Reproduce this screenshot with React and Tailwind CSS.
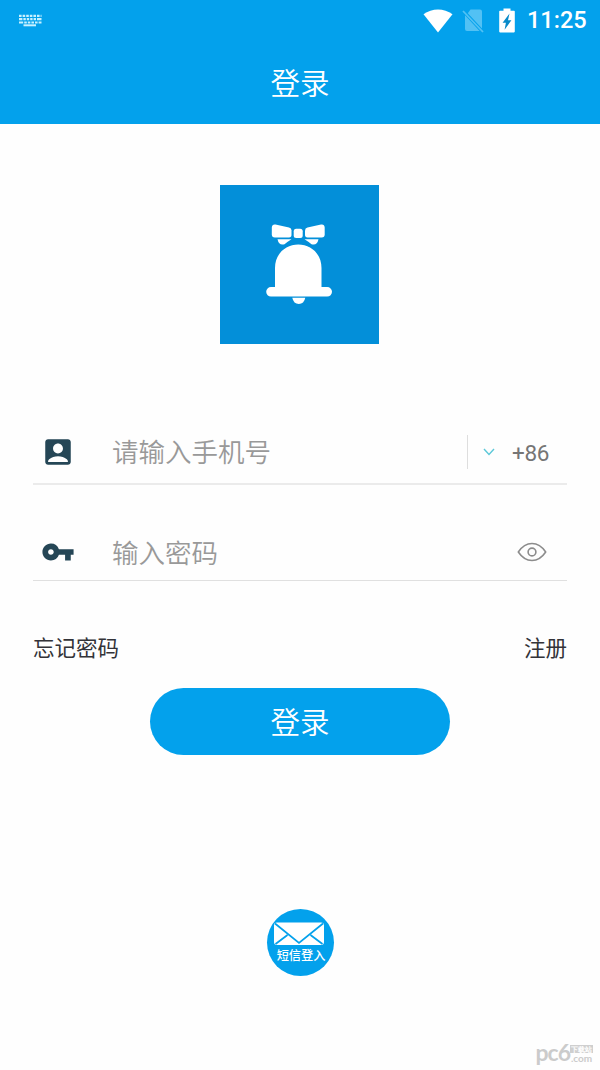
import { useState } from "react";
import { MdAccountBox, MdVpnKey } from "react-icons/md";

function KeyboardIcon() {
  return (
    <svg className="w-[24px] h-[13px]" viewBox="0 0 24 13" fill="none" stroke="#c8f1ff">
      <path d="M1 1.8H23.5" strokeWidth="2.2" strokeDasharray="2.6 1" />
      <path d="M1 5.1H23.5" strokeWidth="2.2" strokeDasharray="3.4 1 2.4 1 2.4 1 2.4 1 2.4 1 5" />
      <path d="M1 8.4H23.5" strokeWidth="2" strokeDasharray="4.2 1 2.6 1 2.6 1 2.6 1 2.6 1 4" />
      <path d="M5.5 11.3H18" strokeWidth="2" />
    </svg>
  );
}

function StatusBar() {
  return (
    <div className="h-[41px] pl-[18px] pr-[13px] flex items-center justify-between text-white">
      <KeyboardIcon />
      <div className="flex items-center">
        <svg className="w-[30px] h-[24px]" viewBox="0 0 30 24" fill="currentColor">
          <path d="M0.5 5.2C9-1.2 21-1.2 29.5 5.2L15 23.5z" />
        </svg>
        <svg className="w-[22px] h-[24px] ml-[9px]" viewBox="0 0 22 24">
          <path d="M8.5 0.5H18a2 2 0 0 1 2 2v17L5.8 4.3zM3 6.2 17.6 22H5a2 2 0 0 1-2-2z" fill="#52c1f4" />
          <path d="M1 2 21 23" stroke="#52c1f4" strokeWidth="1.8" />
        </svg>
        <svg className="w-[16px] h-[25px] ml-[15px]" viewBox="0 0 16 25">
          <path d="M4.5 0.5h7v2.3H15a.8.8 0 0 1 .8.8v20a.8.8 0 0 1-.8.8H1a.8.8 0 0 1-.8-.8v-20a.8.8 0 0 1 .8-.8h3.5z" fill="white" />
          <path d="M10.5 5.5 3.6 14.800h3.300L5.600 21.800l6.800-9.600H9z" fill="#078ac9" />
        </svg>
        <span className="ml-[12px] w-[60px] text-[23.5px] leading-none font-medium whitespace-nowrap font-[Roboto,sans-serif]">11:25</span>
      </div>
    </div>
  );
}

function BellLogo() {
  return (
    <svg className="w-[159px] h-[159px] block bg-[#038fd9]" viewBox="0 0 159 159" fill="white">
      <path d="M55.500 39.500 69 42.600q2.500.6 2.500 3v4.200q0 2.600-2.500 2.600H54.800q-3 0-3-3V42.500q.3-3.600 3.700-3z" />
      <path d="M101 39.500 87.500 42.600q-2.500.6-2.500 3v4.200q0 2.600 2.500 2.600h14.200q3 0 3-3V42.500q-.3-3.600-3.700-3z" />
      <rect x="73.700" y="43.800" width="9" height="9.200" rx="2.500" />
      <path d="M57.500 54.200H71.500Q67 57 64.500 59.200 59 61 57.500 54.200z" />
      <path d="M98.500 54.200H84.500Q89 57 91.500 59.200 97 61 98.500 54.200z" />
      <path d="M55 102V83C55 68.500 66 59.500 78.300 59.500S101.500 68.500 101.500 83v19h5.700a4.800 4.800 0 0 1 0 9.600H51a4.800 4.800 0 0 1 0-9.600z" />
      <path d="M72.300 112.800h13Q84 119 78.800 119T72.300 112.800z" />
    </svg>
  );
}

function EyeIcon() {
  return (
    <svg className="w-[30px] h-[20px]" viewBox="0 0 30 20" fill="none" stroke="#8c8c8c" strokeWidth="1.6">
      <path d="M1.300 10Q7 1.500 15 1.500T28.700 10Q23 18.500 15 18.500T1.300 10z" strokeLinejoin="round" />
      <circle cx="15" cy="10" r="3.900" />
    </svg>
  );
}

function SmsLogin() {
  return (
    <button className="w-[67px] h-[67px] mx-auto rounded-full bg-[#03a1ec] flex flex-col items-center">
      <svg className="w-[52px] h-[24px] mt-[13px] mr-[2px] shrink-0" viewBox="0 0 52 24">
        <rect x="1" y="0.500" width="50" height="22.500" rx="3" fill="white" />
        <path d="M2 1.500 26 21 50 1.500M2.500 22 14.500 13M49.500 22 37.500 13" fill="none" stroke="#03a1ec" strokeWidth="1.700" />
      </svg>
      <span className="ml-[2px] text-[12.200px] leading-[19px] font-medium text-white whitespace-nowrap">短信登入</span>
    </button>
  );
}

function Watermark() {
  return (
    <div className="absolute right-[7px] bottom-[5px] flex items-end text-[#cbcbcb] font-[Lato,sans-serif] font-bold">
      <span className="text-[23px] leading-[26px] tracking-[-1px]">pc6</span>
      <div className="flex flex-col items-center pb-[2px]">
        <span className="bg-[#cfcfcf] text-white text-[7px] leading-[8px] px-px">下载站</span>
        <span className="text-[10px] leading-[10px]">.com</span>
      </div>
    </div>
  );
}

export default function App() {
  const [phone, setPhone] = useState("");
  const [password, setPassword] = useState("");
  const [showPassword, setShowPassword] = useState(false);

  return (
    <div className="relative w-[600px] h-[1070px] overflow-hidden bg-[#fefefe] flex flex-col font-['Noto_Sans_CJK_SC',sans-serif]">
      <header className="h-[124px] shrink-0 bg-[#03a1ec]">
        <StatusBar />
        <h1 className="text-center text-[29.500px] leading-[80px] font-[350] text-white">登录</h1>
      </header>

      <main className="px-[33px] pt-[61px] flex flex-col">
        <div className="ml-[187px]">
          <BellLogo />
        </div>

        <div className="mt-[76px] h-[65px] pl-[8px] flex items-center border-b-2 border-[#ebebeb]">
          <MdAccountBox className="size-[34px] shrink-0 text-[#254656]" />
          <input
            type="tel"
            placeholder="请输入手机号"
            className="ml-[37px] w-[340px] h-[50px] pb-[2px] text-[26.500px] font-[350] outline-none placeholder:text-[#999999]"
            value={phone} onChange={(e) => setPhone(e.target.value)}
          />
          <div className="ml-[15px] h-[34px] flex items-center border-l border-[#dedede]">
            <svg className="w-[12px] h-[8px] ml-[15px]" viewBox="0 0 12 8" fill="none" stroke="#5cc8d8" strokeWidth="1.400">
              <path d="M1 1 6 6.500 11 1" />
            </svg>
            <span className="ml-[17px] pt-[3px] text-[22.500px] leading-none tracking-[-0.3px] text-[#757575] font-[Roboto,sans-serif]">+86</span>
          </div>
        </div>

        <div className="mt-[39px] h-[57px] pl-[8px] pr-[20px] flex items-center border-b border-[#e0e0e0]">
          <MdVpnKey className="size-[34px] shrink-0 text-[#254656]" />
          <input
            type={showPassword ? "text" : "password"}
            placeholder="输入密码"
            className="ml-[37px] flex-1 min-w-0 h-[50px] pb-[2px] text-[26.500px] font-[350] outline-none placeholder:text-[#999999]"
            value={password} onChange={(e) => setPassword(e.target.value)}
          />
          <button onClick={() => setShowPassword(!showPassword)}>
            <EyeIcon />
          </button>
        </div>

        <div className="mt-[50px] flex justify-between text-[21.500px] leading-[32px] text-[#333338]">
          <a>忘记密码</a>
          <a>注册</a>
        </div>

        <button className="mt-[25px] mx-auto w-[300px] h-[67px] pb-[3px] rounded-full bg-[#03a1ec] text-[29.500px] font-[350] text-white">
          登录
        </button>

        <div className="mt-[154px] flex">
          <SmsLogin />
        </div>
      </main>

      <Watermark />
    </div>
  );
}
